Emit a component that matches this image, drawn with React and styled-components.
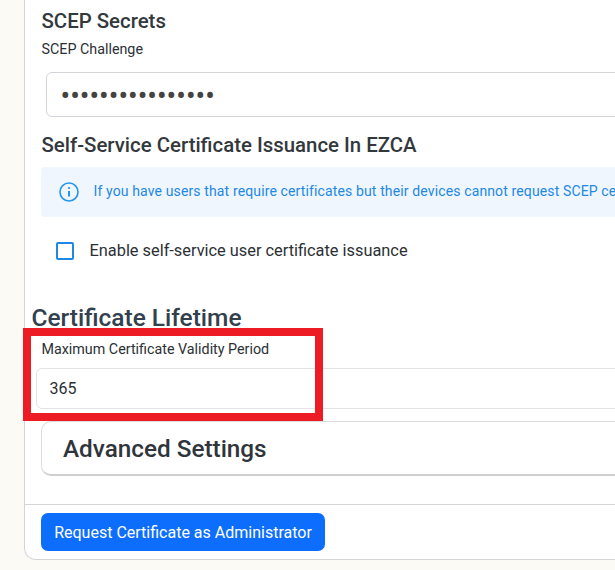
import React from "react";
import styled, { createGlobalStyle } from "styled-components";

const Global = createGlobalStyle`
  html, body {
    margin: 0;
    height: 570px;
    overflow: hidden;
    background: #fbfaf5;
    font-family: Roboto, "Liberation Sans", sans-serif;
  }
`;

const Card = styled.div`
  position: relative;
  box-sizing: border-box;
  width: 900px;
  height: 560px;
  margin-left: 24px;
  background: #fff;
  border: 1px solid #d5d5d5;
  border-top: 0;
  border-radius: 0 0 12px 12px;
  display: flex;
  flex-direction: column;
`;

const Body = styled.div`
  height: 504px;
  box-sizing: border-box;
  padding: 9px 0 0 16.5px;
  display: flex;
  flex-direction: column;
`;

const SectionTitle = styled.h5`
  margin: ${(p) => p.$top || 0}px 0 0;
  font-size: 20.4px;
  line-height: 24px;
  font-weight: 500;
  color: #33383d;
`;

const Label = styled.label`
  display: block;
  font-size: 14.3px;
  line-height: 18px;
  color: #2b3035;
  margin-top: ${(p) => p.$top || 0}px;
`;

const SecretInput = styled.input`
  box-sizing: border-box;
  width: 860px;
  height: 45px;
  margin: 14px 0 0 4.5px;
  padding: 2px 0 0 13.5px;
  outline: none;
  border: 1px solid #d2d4da;
  border-radius: 6px;
  font-family: inherit;
  font-size: 28.6px;
  color: #45433f;
`;

const InfoBox = styled.div`
  box-sizing: border-box;
  width: 860px;
  height: 50px;
  margin: 10px 0 0 -0.5px;
  padding-left: 18px;
  display: flex;
  align-items: center;
  gap: 14.5px;
  background: #eff6fd;
  border-radius: 4px;
  font-size: 14px;
  letter-spacing: 0.13px;
  color: #1e88e5;
  white-space: nowrap;
`;

const InfoText = styled.span`
  margin-bottom: 2px;
`;

const CheckRow = styled.div`
  display: flex;
  align-items: center;
  gap: 15.5px;
  margin: 24px 0 0 14.5px;
  font-size: 16.35px;
  color: #2c3034;
`;

const CheckBox = styled.span`
  box-sizing: border-box;
  width: 18px;
  height: 18px;
  border: 2px solid #1e88e5;
  border-radius: 2px;
`;

const LifetimeTitle = styled.h4`
  margin: 44px 0 0 -10px;
  font-size: 24.48px;
  line-height: 28px;
  font-weight: 500;
  color: #33404d;
`;

const NumberInput = styled.input`
  box-sizing: border-box;
  width: 860px;
  height: 41px;
  margin: 10px 0 0 -5.5px;
  padding: 0 0 0 12.5px;
  outline: none;
  border: 1px solid #e2e3e5;
  border-radius: 6px;
  font-family: inherit;
  font-size: 16px;
  color: #2c3034;
`;

const Accordion = styled.div`
  box-sizing: border-box;
  width: 860px;
  height: 55px;
  margin: 12px 0 0 -0.5px;
  padding-left: 21px;
  display: flex;
  align-items: center;
  border: 1px solid #dcdcdc;
  border-bottom: 2px solid #cfcfcf;
  border-radius: 10px;
  font-size: 24.3px;
  font-weight: 500;
  color: #2f353b;
`;

const Footer = styled.div`
  flex: 1;
  padding: 8px 0 0 16px;
  border-top: 1px solid #d5d5d5;
`;

const PrimaryButton = styled.button`
  width: 284px;
  height: 38px;
  padding: 0;
  border: 0;
  border-radius: 7px;
  background: #0d6efd;
  color: #fff;
  font-family: inherit;
  font-size: 16px;
`;

const Highlight = styled.div`
  position: absolute;
  left: -2px;
  top: 328px;
  width: 300px;
  height: 93px;
  box-sizing: border-box;
  border: 8px solid #ed1c24;
  pointer-events: none;
`;

const InfoIcon = () => (
  <svg width="20" height="20" viewBox="0 0 20 20" fill="none" stroke="#2196f3" strokeWidth="1.6">
    <circle cx="10" cy="10" r="9" />
    <path d="M10 9v5.5" strokeWidth="2" />
    <circle cx="10" cy="6" r="1.1" fill="#2196f3" stroke="none" />
  </svg>
);

const App = () => {
  return (
    <>
      <Global />
      <Card>
        <Body>
          <SectionTitle>SCEP Secrets</SectionTitle>
          <Label $top={7}>SCEP Challenge</Label>
          <SecretInput type="password" value="aaaaaaaaaaaaaaaa" readOnly />
          <SectionTitle $top={16}>Self-Service Certificate Issuance In EZCA</SectionTitle>
          <InfoBox>
            <InfoIcon />
            <InfoText>If you have users that require certificates but their devices cannot request SCEP certificates, you can enable self-service</InfoText>
          </InfoBox>
          <CheckRow>
            <CheckBox />
            Enable self-service user certificate issuance
          </CheckRow>
          <LifetimeTitle>Certificate Lifetime</LifetimeTitle>
          <Label $top={8}>Maximum Certificate Validity Period</Label>
          <NumberInput value="365" readOnly />
          <Accordion>Advanced Settings</Accordion>
        </Body>
        <Footer>
          <PrimaryButton>Request Certificate as Administrator</PrimaryButton>
        </Footer>
        <Highlight />
      </Card>
    </>
  );
};

export default App;
